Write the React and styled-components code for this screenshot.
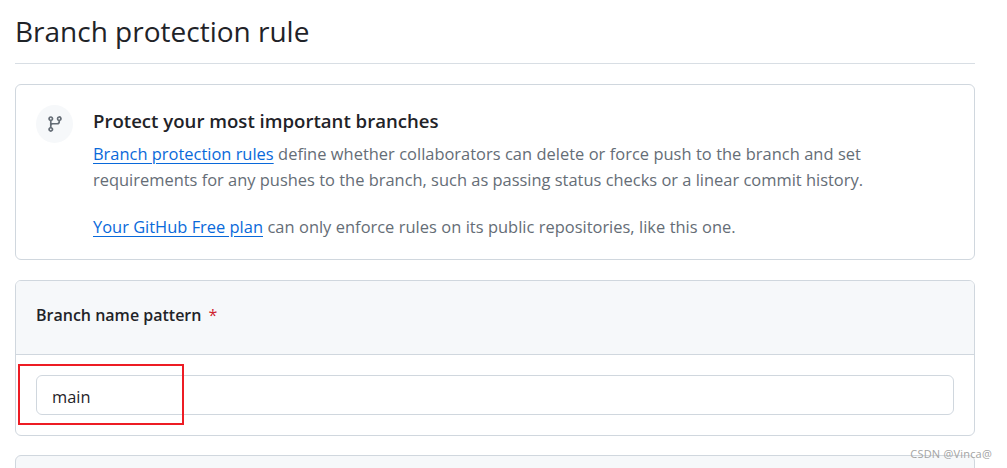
import React from "react";
import styled, { createGlobalStyle } from "styled-components";

const GlobalStyle = createGlobalStyle`
  html, body {
    margin: 0;
    padding: 0;
    height: 468px;
    overflow: hidden;
    background: #ffffff;
    font-family: "Open Sans", "Noto Sans", sans-serif;
    color: #1f2328;
  }
`;

const Page = styled.div`
  position: relative;
  width: 1007px;
  height: 468px;
  overflow: hidden;
  padding: 0 32px 0 15px;
  box-sizing: border-box;
`;

const TitleBar = styled.div`
  height: 64px;
  box-sizing: border-box;
  border-bottom: 1px solid #d8dee4;
  margin-bottom: 20px;
  padding-top: 11px;
`;

const Title = styled.h1`
  margin: 0;
  font-size: 28px;
  line-height: 40px;
  font-weight: 400;
`;

const InfoCard = styled.section`
  display: flex;
  gap: 20px;
  height: 176px;
  box-sizing: border-box;
  padding: 20px;
  border: 1px solid #d0d7de;
  border-radius: 6px;
  margin-bottom: 20px;
`;

const IconCircle = styled.div`
  flex: none;
  display: flex;
  align-items: center;
  justify-content: center;
  width: 37px;
  height: 38px;
  border-radius: 50%;
  background: #f6f8fa;
  color: #656d76;
`;

const InfoBody = styled.div`
  font-size: 16.45px;
  line-height: 26px;
  color: #656d76;
`;

const InfoTitle = styled.h2`
  margin: 3px 0 7px;
  font-size: 18.6px;
  line-height: 26px;
  font-weight: 600;
  color: #1f2328;
`;

const Paragraph = styled.p`
  margin: ${(p) => p.$top || 0}px 0 0;
  white-space: nowrap;
  word-spacing: ${(p) => (p.$wide ? "0.18px" : "0")};
`;

const Link = styled.a`
  color: #0969da;
  text-decoration: underline;
  text-underline-offset: 3px;
  word-spacing: 0;
`;

const Panel = styled.section`
  border: 1px solid #d0d7de;
  border-radius: 6px;
  margin-bottom: 19px;
  overflow: hidden;
`;

const PanelHeader = styled.div`
  display: flex;
  align-items: center;
  gap: 7px;
  height: 67px;
  padding: 0 20px 6px;
  background: #f6f8fa;
  border-bottom: 1px solid #d0d7de;
  font-size: 16px;
  font-weight: 600;
`;

const Required = styled.span`
  color: #cf222e;
  font-weight: 400;
`;

const PanelBody = styled.div`
  padding: 20px;
`;

const PatternInput = styled.input`
  display: block;
  width: 100%;
  height: 40px;
  box-sizing: border-box;
  padding: 2px 15px 0;
  border: 1px solid #d0d7de;
  border-radius: 6px;
  background: #ffffff;
  font: 400 16.4px "Open Sans", "Noto Sans", sans-serif;
  color: #1f2328;
  outline: none;
`;

const EmptyPanel = styled.section`
  height: 60px;
  border: 1px solid #d0d7de;
  border-radius: 6px;
  background: #f6f8fa;
`;

const Highlight = styled.div`
  position: absolute;
  left: 18px;
  top: 364px;
  width: 166px;
  height: 61px;
  box-sizing: border-box;
  border: 2px solid #ed1c24;
  pointer-events: none;
`;

const Watermark = styled.div`
  position: absolute;
  right: 15px;
  top: 447px;
  font-size: 11px;
  line-height: 14px;
  color: #a3a3a3;
  letter-spacing: 0.2px;
`;

const BranchIcon = () => (
  <svg width="18" height="18" viewBox="0 0 16 16" fill="currentColor" aria-hidden="true">
    <path d="M9.5 3.25a2.25 2.25 0 1 1 3 2.122V6A2.5 2.5 0 0 1 10 8.5H6a1 1 0 0 0-1 1v1.128a2.251 2.251 0 1 1-1.5 0V5.372a2.25 2.25 0 1 1 1.5 0v1.836A2.493 2.493 0 0 1 6 7h4a1 1 0 0 0 1-1v-.628A2.25 2.25 0 0 1 9.5 3.25Zm-6 0a.75.75 0 1 0 1.5 0 .75.75 0 0 0-1.5 0Zm8.25-.75a.75.75 0 1 0 0 1.5.75.75 0 0 0 0-1.5ZM4.25 12a.75.75 0 1 0 0 1.5.75.75 0 0 0 0-1.5Z" />
  </svg>
);

export default function App() {
  return (
    <Page>
      <GlobalStyle />
      <TitleBar>
        <Title>Branch protection rule</Title>
      </TitleBar>

      <InfoCard>
        <IconCircle>
          <BranchIcon />
        </IconCircle>
        <InfoBody>
          <InfoTitle>Protect your most important branches</InfoTitle>
          <Paragraph $wide>
            <Link>Branch protection rules</Link> define whether collaborators can delete or force push to the branch and set
          </Paragraph>
          <Paragraph>
            requirements for any pushes to the branch, such as passing status checks or a linear commit history.
          </Paragraph>
          <Paragraph $top={21} $wide>
            <Link>Your GitHub Free plan</Link> can only enforce rules on its public repositories, like this one.
          </Paragraph>
        </InfoBody>
      </InfoCard>

      <Panel>
        <PanelHeader>
          Branch name pattern <Required>*</Required>
        </PanelHeader>
        <PanelBody>
          <PatternInput defaultValue="main" />
        </PanelBody>
      </Panel>

      <EmptyPanel />

      <Highlight />
      <Watermark>CSDN @Vinca@</Watermark>
    </Page>
  );
}
